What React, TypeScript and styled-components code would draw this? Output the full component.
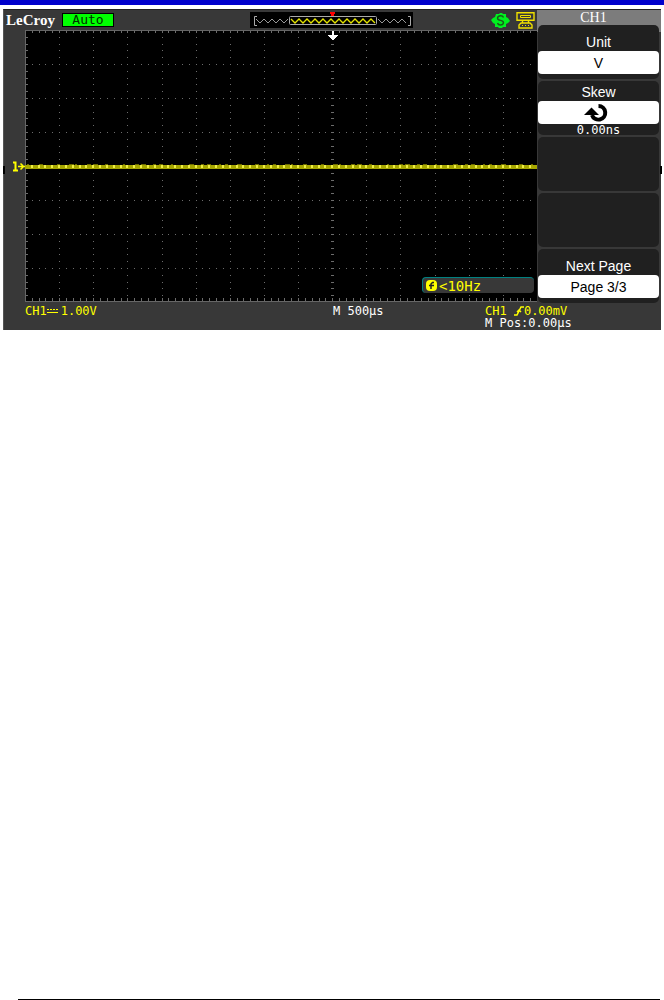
import React from 'react';
import styled, { createGlobalStyle } from 'styled-components';

const GlobalStyle = createGlobalStyle`
  * { box-sizing: border-box; }
  body { margin: 0; background: #fff; }
`;

const sans = '"Liberation Sans", Arial, sans-serif';
const serif = '"Liberation Serif", "Times New Roman", serif';
const mono = '"DejaVu Sans Mono", monospace';

const Page = styled.div`
  min-height: 100vh;
  display: flex;
  flex-direction: column;
`;

const TopRule = styled.div`
  height: 5px;
  background: #0000cc;
`;

const FootRule = styled.footer`
  margin: auto 4px 0 18px;
  border-bottom: 1px solid #000;
`;

const Scope = styled.main`
  position: relative;
  margin: 4px 3px 0;
  background: #383838;
  border-top: 1px solid #222;
  border-left: 1px solid #555;
`;

const EdgeMark = styled.span<{ $side: 'left' | 'right' }>`
  position: absolute;
  top: 156px;
  ${(p) => p.$side}: -1px;
  width: 2px;
  height: 8px;
  background: #000;
`;

const Screen = styled.div`
  display: flex;
  align-items: flex-start;
`;

const Display = styled.section`
  flex: 1;
  min-width: 0;
`;

const StatusBar = styled.header`
  display: flex;
  align-items: center;
  height: 20px;
  padding: 0 2px;
`;

const Brand = styled.span`
  width: 56px;
  font: bold 15px/20px ${serif};
  color: #fff;
`;

const RunState = styled.span`
  width: 52px;
  height: 14px;
  border: 1px solid #000;
  background: #00ff00;
  color: #003000;
  font: 13px/12px ${mono};
  text-align: center;
`;

const MemoryBar = styled.svg`
  display: block;
  margin-left: auto;
`;

const StatusIcons = styled.div`
  display: flex;
  gap: 6px;
  margin-left: 78px;
`;

const PlotRow = styled.div`
  display: flex;
`;

const Gutter = styled.div`
  width: 21px;
  padding: 130px 0 0 8px;
  display: flex;
  align-items: flex-start;
`;

const Plot = styled.div`
  position: relative;
  flex: 1;
  min-width: 0;
  height: 272px;
  background: #000;
`;

const Graticule = styled.svg`
  display: block;
  width: 100%;
  height: 100%;
`;

const Frequency = styled.div`
  position: absolute;
  right: 3px;
  bottom: 9px;
  display: flex;
  align-items: center;
  gap: 2px;
  width: 112px;
  height: 16px;
  padding-left: 3px;
  border-top: 1px solid #008080;
  border-left: 1px solid #008080;
  border-radius: 4px;
  background: #383838;
  color: #ffff00;
  font: 14px/14px ${mono};
`;

const Menu = styled.nav`
  display: flex;
  flex-direction: column;
  gap: 2px;
  width: 124px;
  padding: 0 2px 0 1px;
  background: linear-gradient(#7c7c7c, #7c7c7c) top / 100% 22px no-repeat;
`;

const MenuTitle = styled.h1`
  margin: 0;
  padding-right: 10px;
  height: 13px;
  color: #fff;
  font: 14px/16px ${serif};
  text-align: center;
`;

const MenuButton = styled.button<{ $compact?: boolean }>`
  display: flex;
  flex-direction: column;
  align-items: stretch;
  height: 54px;
  padding: ${(p) => (p.$compact ? 2 : 8)}px 0 0;
  border: 0;
  border-radius: 5px;
  background: #202020;
  color: #fff;
  font: 14px/18px ${sans};
  text-align: center;
`;

const MenuValue = styled.span`
  display: flex;
  align-items: center;
  justify-content: center;
  flex: none;
  height: 23px;
  border-radius: 4px;
  background: #fff;
  color: #000;
`;

const MenuNote = styled.span`
  font: 12px/12px ${mono};
`;

const Readouts = styled.footer`
  display: grid;
  grid-template-columns: 308fr 152fr 176fr;
  height: 27px;
  padding: 2px 0 0 21px;
  color: #fff;
  font: 12px/12px ${mono};
`;

const Readout = styled.div<{ $channel?: boolean }>`
  display: flex;
  align-items: center;
  height: 12px;
  white-space: pre;
  color: ${(p) => (p.$channel ? '#ffff00' : '#fff')};
`;

const CouplingIcon = styled.svg`
  margin-right: 3px;
`;

const COLS = 15;
const ROWS = 8;
const STEPS = 5;
const W = 512;
const H = 272;

const gridPath = () => {
  const sx = W / (COLS * STEPS);
  const sy = H / (ROWS * STEPS);
  const dot = (x: number, y: number, w: number, h: number) =>
    `M${Math.round(x)} ${Math.round(y)}h${w}v${h}h-${w}z`;
  let d = '';
  for (let c = 1; c < COLS; c++) {
    for (let r = 1; r < ROWS * STEPS; r++) {
      const centre = c === 9;
      d += dot(c * STEPS * sx - (centre ? 1 : 0), r * sy, centre ? 3 : 1, 1);
    }
  }
  for (let r = 1; r < ROWS; r++) {
    for (let c = 1; c < COLS * STEPS; c++) d += dot(c * sx, r * STEPS * sy, 1, 1);
  }
  for (let c = 1; c < COLS * STEPS; c++) {
    d += dot(c * sx, 1, 1, 2) + dot(c * sx, H - 4, 1, 3);
  }
  for (let r = 1; r < ROWS * STEPS; r++) d += dot(1, r * sy, 2, 1);
  return d;
};

const noisePath = () => {
  let d = '';
  for (let i = 0; i < 85; i++) {
    const x = i * 6 + 2;
    if ((i * 7) % 11 < 6) d += `M${x} 134h${2 + (i % 4)}v1H${x}z`;
  }
  return d;
};

const peaksPath = () => {
  let d = '';
  for (let c = 1; c < COLS * STEPS; c++) {
    d += `M${Math.round((c * W) / (COLS * STEPS)) - 1} 135h2v3h-2z`;
  }
  return d;
};

const zigzag = (from: number, to: number) => {
  const pts: string[] = [];
  let i = 0;
  for (let x = from; x <= to; x += 4, i++) pts.push(`${x},${i % 2 ? 11 : 7}`);
  return pts.join(' ');
};

export default function App() {
  return (
    <Page>
      <GlobalStyle />
      <TopRule />
      <Scope>
        <Screen>
          <Display>
            <StatusBar>
              <Brand>LeCroy</Brand>
              <RunState>Auto</RunState>
              <MemoryBar width="163" height="16" viewBox="0 0 163 16" fill="none">
                <path fill="#000" d="M0 0h163v16H0z" />
                <path stroke="#aaa" d="M7 4.500H4.500v9H7M158 4.500h2.500v9H158" />
                <polyline points={zigzag(6, 38)} stroke="#999" />
                <polyline points={zigzag(128, 158)} stroke="#999" />
                <rect x="39.500" y="4.500" width="87" height="8" rx="1" stroke="#aaa" />
                <polyline points={zigzag(41, 126)} stroke="#e6e600" strokeWidth="1.300" />
                <path fill="#f00" d="M80 0h5v2h-1v2h-3V2h-1z" />
              </MemoryBar>
              <StatusIcons>
                <svg width="19" height="17" viewBox="0 0 19 17" fill="none">
                  <path fill="#00f020" d="M5 2h3l1-1h2l1 1h3v3l2 1 2 3-2 2-2 1v3h-3l-1 1H8l-1-1H4v-3l-2-1-2-3 2-2 2-1z" />
                  <path stroke="#1c5a1c" strokeWidth="1.400" d="M12.500 5.500Q12 3.800 9.500 3.800T6.500 6Q6.500 8 9.500 8.400T12.500 11Q12 13 9.500 13T6.500 11" />
                </svg>
                <svg width="19" height="17" viewBox="0 0 19 17" fill="none" stroke="#f0e000">
                  <path strokeWidth="1.400" d="M1 .7h17v7.600H1zM6.500 8.500v2.300M12.500 8.500v2.300M5 11h9l2 2v3H3v-3z" />
                  <path d="M4.500 3.500h10v2h-10z" />
                  <path d="M6 13.500h1M9 13.500h1M12 13.500h1" />
                </svg>
              </StatusIcons>
            </StatusBar>
            <PlotRow>
              <Gutter>
                <svg width="13" height="12" viewBox="0 0 13 12" fill="none" stroke="#ffff00">
                  <path strokeWidth="2" d="M1 2.500h2.500V11M1 10.500h5" />
                  <path strokeWidth="1.500" d="M6 6.500h7M8.500 3.500l3 3-3 3" />
                </svg>
              </Gutter>
              <Plot>
                <Graticule viewBox={`0 0 ${W} ${H}`} preserveAspectRatio="none" shapeRendering="crispEdges">
                  <path fill="#6c6c6c" d={gridPath()} />
                  <path fill="none" stroke="#666" d="M.5 272V.5H512M0 271.500h512" />
                  <path fill="#a6a600" d="M0 135h512v4H0z" />
                  <path fill="#6b6b00" d={noisePath()} />
                  <path fill="#eeee44" d={peaksPath()} />
                  <path fill="#fff" d="M307 1h2v4h4v1h-1v1h-1v1h-1v1h-1v1h-2V9h-1V8h-1V7h-1V6h-1V5h4z" />
                </Graticule>
                <Frequency>
                  <svg width="11" height="11" viewBox="0 0 11 11" fill="none">
                    <rect width="11" height="11" rx="4" fill="#ffff00" />
                    <path stroke="#222" strokeWidth="1.500" d="M8 2.500H6.500L5 4v5M3 5.500h5" />
                  </svg>
                  <span>&lt;10Hz</span>
                </Frequency>
              </Plot>
            </PlotRow>
          </Display>
          <Menu>
            <MenuTitle>CH1</MenuTitle>
            <MenuButton>
              Unit
              <MenuValue>V</MenuValue>
            </MenuButton>
            <MenuButton $compact>
              Skew
              <MenuValue>
                <svg width="30" height="20" viewBox="0 0 30 20" fill="none">
                  <path stroke="#000" strokeWidth="4" d="M14.500 3A6.800 6.800 0 1 1 8 12" />
                  <path fill="#000" d="M0 12l7.500-7.500L15 12z" />
                </svg>
              </MenuValue>
              <MenuNote>0.00ns</MenuNote>
            </MenuButton>
            <MenuButton aria-label="Empty" />
            <MenuButton aria-label="Empty" />
            <MenuButton>
              Next Page
              <MenuValue>Page 3/3</MenuValue>
            </MenuButton>
          </Menu>
        </Screen>
        <Readouts>
          <Readout $channel>
            CH1
            <CouplingIcon width="11" height="6" viewBox="0 0 11 6" stroke="#ffff00">
              <path strokeDasharray="2 1" d="M0 1.500h11" />
              <path d="M0 4.500h11" />
            </CouplingIcon>
            1.00V
          </Readout>
          <Readout>M 500µs</Readout>
          <div>
            <Readout $channel>
              CH1{' '}
              <svg width="10" height="10" viewBox="0 0 10 10" fill="none" stroke="#ffff00" strokeWidth="1.500">
                <path d="M0 9h3l4-8h3M3 6l2-2 2 2" />
              </svg>
              0.00mV
            </Readout>
            <Readout>M Pos:0.00µs</Readout>
          </div>
        </Readouts>
        <EdgeMark $side="left" />
        <EdgeMark $side="right" />
      </Scope>
      <FootRule />
    </Page>
  );
}
